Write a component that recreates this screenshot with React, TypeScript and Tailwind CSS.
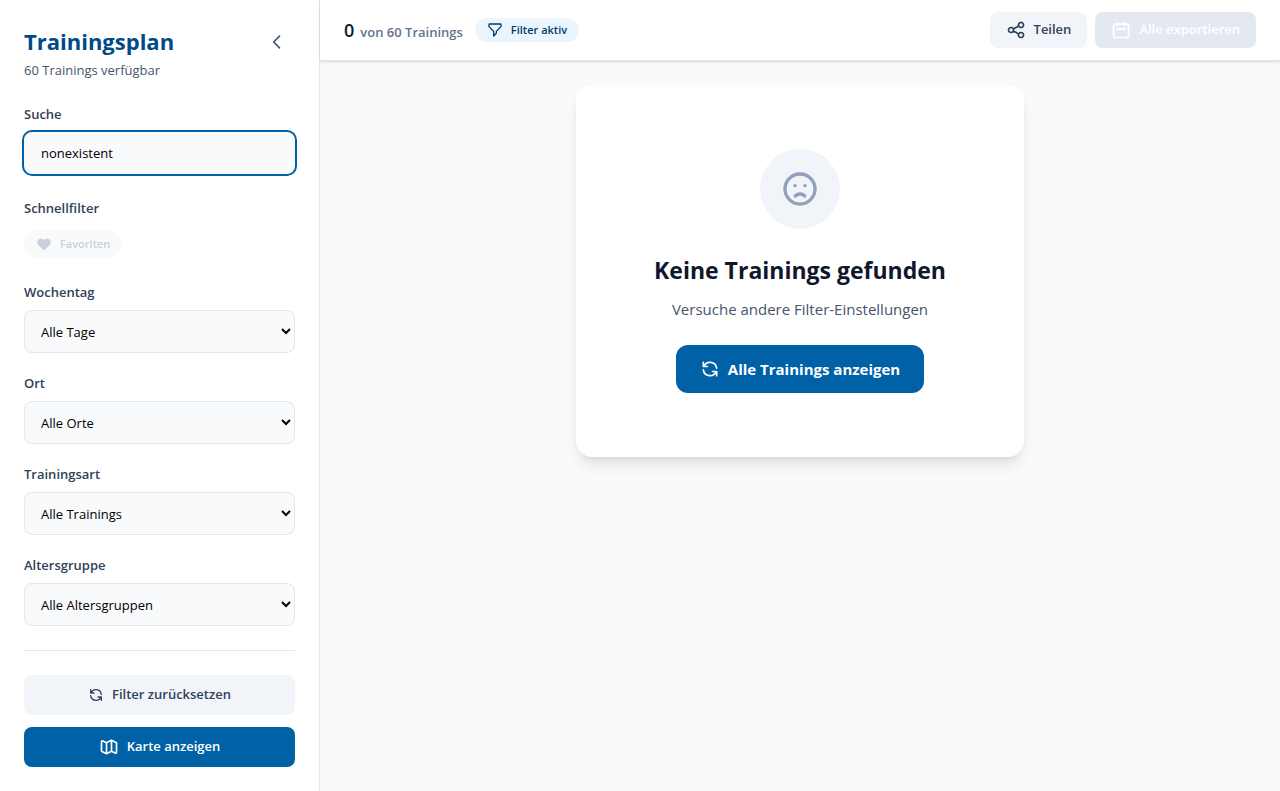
import type { ReactNode, SVGProps } from "react";

function Icon({ children, ...rest }: { children: ReactNode } & SVGProps<SVGSVGElement>) {
  return (
    <svg viewBox="0 0 24 24" fill="none" stroke="currentColor" strokeWidth={2} strokeLinecap="round" strokeLinejoin="round" aria-hidden="true" {...rest}>
      {children}
    </svg>
  );
}

function RefreshIcon({ className }: { className: string }) {
  return (
    <Icon className={className}>
      <path d="M4 4v5h.582m15.356 2A8.001 8.001 0 004.582 9m0 0H9m11 11v-5h-.581m0 0a8.003 8.003 0 01-15.357-2m15.357 2H15" />
    </Icon>
  );
}

const selects = [
  { id: "wochentag", label: "Wochentag", value: "Alle Tage" },
  { id: "ort", label: "Ort", value: "Alle Orte" },
  { id: "trainingsart", label: "Trainingsart", value: "Alle Trainings" },
  { id: "altersgruppe", label: "Altersgruppe", value: "Alle Altersgruppen" },
];

const labelClass = "block text-[13px] leading-5 font-semibold text-slate-700";

function Sidebar() {
  return (
    <aside className="flex w-80 shrink-0 flex-col border-r border-slate-200 bg-white p-6">
      <div className="flex items-start justify-between">
        <div>
          <h1 className="mb-0.5 text-[22px] leading-[34px] font-bold text-[#004b87]">Trainingsplan</h1>
          <p className="text-[13px] leading-5 text-slate-600">60 Trainings verfügbar</p>
        </div>
        <button type="button" aria-label="Seitenleiste einklappen" className="flex size-9 items-center justify-center rounded-lg text-slate-600">
          <Icon className="size-5">
            <path d="M15 19l-7-7 7-7" />
          </Icon>
        </button>
      </div>

      <div className="mt-6">
        <label htmlFor="suche" className={labelClass}>Suche</label>
        <input
          id="suche"
          type="text"
          defaultValue="nonexistent"
          className="mt-2 block h-[42px] w-full rounded-lg bg-slate-50 px-[17px] text-[13px] text-black outline-2 outline-[#0061a6]"
        />
      </div>

      <div className="mt-6">
        <h2 className={labelClass}>Schnellfilter</h2>
        <button type="button" disabled className="mt-3 flex h-7 items-center gap-2 rounded-full bg-slate-50 px-3 text-[11px] font-semibold text-[#c8d0dc]">
          <Icon className="size-4" fill="currentColor">
            <path d="M4.318 6.318a4.5 4.5 0 000 6.364L12 20.364l7.682-7.682a4.5 4.5 0 00-6.364-6.364L12 7.636l-1.318-1.318a4.5 4.5 0 00-6.364 0z" />
          </Icon>
          Favoriten
        </button>
      </div>

      <div className="mt-6 flex flex-col gap-5">
        {selects.map((s) => (
          <div key={s.id}>
            <label htmlFor={s.id} className={labelClass}>{s.label}</label>
            <select id={s.id} className="mt-2 block h-[43px] w-full rounded-lg border border-slate-200 bg-slate-50 px-3 text-[13px] text-black">
              <option>{s.value}</option>
            </select>
          </div>
        ))}
      </div>

      <div className="mt-6 flex flex-col gap-3 border-t border-slate-200 pt-6">
        <button type="button" className="flex h-10 items-center justify-center gap-2 rounded-lg bg-slate-100 text-[13px] font-semibold text-slate-700">
          <RefreshIcon className="size-4" />
          Filter zurücksetzen
        </button>
        <button type="button" className="flex h-10 items-center justify-center gap-2 rounded-lg bg-[#0061a6] text-[13px] font-semibold text-white">
          <Icon className="size-5">
            <path d="M9 20l-5.447-2.724A1 1 0 013 16.382V5.618a1 1 0 011.447-.894L9 7m0 13l6-3m-6 3V7m6 10l4.553 2.276A1 1 0 0021 18.382V7.618a1 1 0 00-.553-.894L15 4m0 13V4m0 0L9 7" />
          </Icon>
          Karte anzeigen
        </button>
      </div>
    </aside>
  );
}

function Header() {
  return (
    <header className="flex items-center justify-between border-b border-slate-200 bg-white px-6 py-3 shadow-sm">
      <div className="flex items-center gap-3">
        <p className="flex items-baseline gap-1.5 text-[13px] leading-6 font-semibold text-slate-500">
          <span className="text-lg leading-7 text-slate-900">0</span>
          <span>von 60 Trainings</span>
        </p>
        <span className="flex h-6 items-center gap-2 rounded-full bg-[#ebf5fd] px-3 text-[11px] font-semibold text-[#003b6b]">
          <Icon className="size-4">
            <path d="M3 4a1 1 0 011-1h16a1 1 0 011 1v2.586a1 1 0 01-.293.707l-6.414 6.414a1 1 0 00-.293.707V17l-4 4v-6.586a1 1 0 00-.293-.707L3.293 7.293A1 1 0 013 6.586V4z" />
          </Icon>
          Filter aktiv
        </span>
      </div>
      <div className="flex items-center gap-2">
        <button type="button" className="flex h-9 items-center gap-2 rounded-lg bg-slate-100 px-4 text-[13px] font-semibold text-slate-700">
          <Icon className="size-5">
            <path d="M8.684 13.342C8.886 12.938 9 12.482 9 12c0-.482-.114-.938-.316-1.342m0 2.684a3 3 0 110-2.684m0 2.684l6.632 3.316m-6.632-6l6.632-3.316m0 0a3 3 0 105.367-2.684 3 3 0 00-5.367 2.684zm0 9.316a3 3 0 105.368 2.684 3 3 0 00-5.368-2.684z" />
          </Icon>
          Teilen
        </button>
        <button type="button" disabled className="flex h-9 items-center gap-2 rounded-lg bg-[#e4e9f0] px-4 text-[13px] font-semibold text-white">
          <Icon className="size-5">
            <path d="M8 7V3m8 4V3m-9 8h10M5 21h14a2 2 0 002-2V7a2 2 0 00-2-2H5a2 2 0 00-2 2v12a2 2 0 002 2z" />
          </Icon>
          Alle exportieren
        </button>
      </div>
    </header>
  );
}

export default function App() {
  return (
    <div className="flex min-h-screen bg-slate-50 font-['Open_Sans','Noto_Sans',sans-serif]">
      <Sidebar />
      <div className="flex min-w-0 flex-1 flex-col">
        <Header />
        <main className="flex-1 p-6">
          <section className="mx-auto flex max-w-md flex-col items-center rounded-2xl bg-white px-6 py-16 text-center shadow-lg">
            <div className="flex size-20 items-center justify-center rounded-full bg-slate-100 text-slate-400">
              <Icon className="size-10">
                <path d="M9.172 16.172a4 4 0 015.656 0M9 10h.01M15 10h.01M21 12a9 9 0 11-18 0 9 9 0 0118 0z" />
              </Icon>
            </div>
            <h2 className="mt-6 mb-2.5 text-[23px] leading-[34px] font-bold text-slate-900">Keine Trainings gefunden</h2>
            <p className="text-[15px] leading-6 text-slate-600">Versuche andere Filter-Einstellungen</p>
            <button type="button" className="mt-6 flex h-12 items-center gap-2 rounded-xl bg-[#0061a6] px-6 text-[15px] font-bold text-white">
              <RefreshIcon className="size-5" />
              Alle Trainings anzeigen
            </button>
          </section>
        </main>
      </div>
    </div>
  );
}
